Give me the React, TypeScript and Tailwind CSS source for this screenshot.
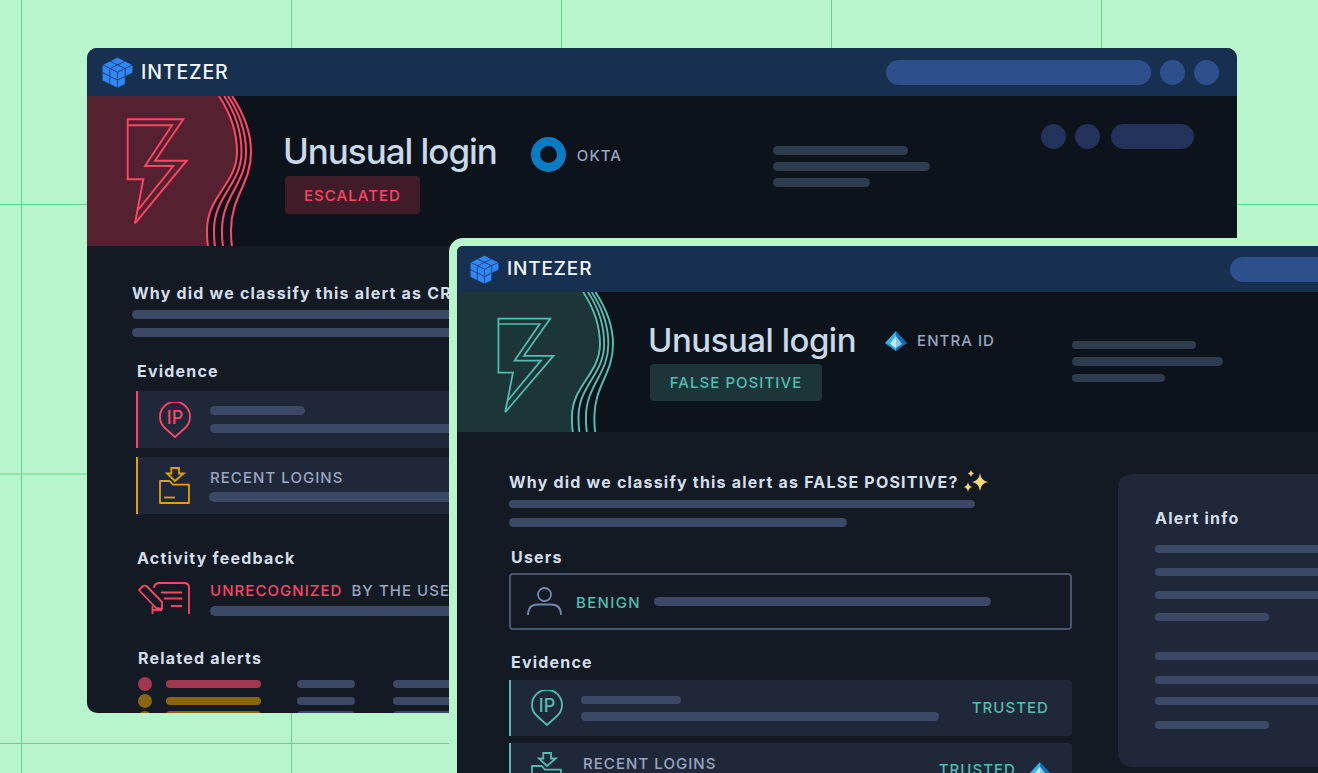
const font = "[font-family:Inter,'Liberation_Sans',sans-serif]";

const logoCells = () => {
  const p = (u: number, v: number, z: number) => `${15.5 + (u - v) * 7.6},${(u + v) * 3.7 + z * 7.8 + 0.5}`;
  const cells: string[] = [];
  for (let u = 0; u < 2; u++) for (let v = 0; v < 2; v++) cells.push([p(u, v, 0), p(u + 1, v, 0), p(u + 1, v + 1, 0), p(u, v + 1, 0)].join(" "));
  for (let u = 0; u < 2; u++) for (let z = 0; z < 2; z++) cells.push([p(u, 2, z), p(u + 1, 2, z), p(u + 1, 2, z + 1), p(u, 2, z + 1)].join(" "));
  cells.push([p(2, 1, 0), p(2, 0, 0), p(2, 0, 1), p(2, 1, 1)].join(" "));
  cells.push([p(2, 2, 0), p(2, 1, 0), p(2, 1, 1), p(2, 2, 1)].join(" "));
  cells.push([p(2, 2, 1), p(2, 1, 1), p(2, 1, 2), p(2, 2, 2)].join(" "));
  return cells;
};

function Logo({ small }: { small?: boolean }) {
  const size = small ? 29 : 31;
  return (
    <div className="flex items-center gap-[8px]">
      <svg width={size} height={size} viewBox="0 0 31 31">
        {logoCells().map((c) => (
          <polygon key={c} points={c} fill="#2f86f6" stroke="#18304f" strokeWidth="0.5" />
        ))}
      </svg>
      <span className={`${font} ${small ? "text-[19px]" : "text-[19.5px]"} leading-[24px] font-medium tracking-[0.045em] text-[#f2f6fb]`}>INTEZER</span>
    </div>
  );
}

function HeroArt({ color, fill, width, height, shift = 0, boltTransform }: { color: string; fill: string; width: number; height: number; shift?: number; boltTransform?: string }) {
  const lines = [
    [132, 150, 120],
    [137, 154.5, 127],
    [141, 159, 135],
    [145, 164, 144],
  ];
  const wave = ([t, m, b]: number[]) => `${t} 0 C ${t + 12} 18 ${m} 38 ${m} 56 C ${m} 88 ${b} 100 ${b} 134 C ${b} 140 ${b} 145 ${b + 1} 150`;
  return (
    <svg width={width} height={height} viewBox="0 0 170 150" className="shrink-0" fill="none">
      <g transform={`translate(${shift} 0)`}>
        <path d={`M${-shift} 0 H132 C144 18 150 38 150 56 C150 88 120 100 120 134 C120 140 120 145 121 150 H${-shift} Z`} fill={fill} />
        {lines.map((l) => (
          <path key={l[0]} d={`M${wave(l)}`} stroke={color} strokeWidth="2.1" />
        ))}
      </g>
      <g transform={boltTransform}>
        <path d="M40.7 23.3 H96.3 L68 64.7 H99.7 L48 127.3 L56.3 83.3 H40.7 Z" stroke={color} strokeWidth="1.9" />
        <path d="M40.7 29.3 H85 L58 70 H86.3 L51 114" stroke={color} strokeWidth="1.9" />
      </g>
    </svg>
  );
}

function IpIcon({ color }: { color: string }) {
  return (
    <svg width="32" height="36" viewBox="0 0 32 36" fill="none" className="shrink-0">
      <path d="M16 35 L6 26 A15 15 0 1 1 26 26 Z" stroke={color} strokeWidth="1.8" strokeLinejoin="round" />
      <text x="16" y="22" textAnchor="middle" fontSize="18" fontWeight="500" fontFamily="Inter, sans-serif" fill={color}>IP</text>
    </svg>
  );
}

function FolderIcon({ color }: { color: string }) {
  return (
    <svg width="31" height="37" viewBox="0 0 31 37" fill="none" className="shrink-0">
      <path d="M12.3 1 H20 V6.5 H24.7 L16 14 L8 6.5 H12.3 Z" stroke={color} strokeWidth="1.8" />
      <path d="M1 14 H10.7 L14 17.7 H30 V36 H1 Z" stroke={color} strokeWidth="1.8" strokeLinejoin="round" />
      <path d="M5 30.5 H16" stroke={color} strokeWidth="1.8" />
    </svg>
  );
}

function NoteIcon({ color }: { color: string }) {
  return (
    <svg width="52" height="33" viewBox="0 0 52 33" fill="none" className="shrink-0">
      <path d="M16 6 Q16 1 22 1 H46 Q51 1 51 6 V32" stroke={color} strokeWidth="1.8" />
      <path d="M23 10.5 H44 M26 16.5 H44 M33 24 H44" stroke={color} strokeWidth="1.8" />
      <path d="M1 8 L5 4 Q7 3 9 4.5 L24 20 V27 L18 26 Z" stroke={color} strokeWidth="1.8" strokeLinejoin="round" />
      <path d="M14.5 24 V32 M14.5 28 H24" stroke={color} strokeWidth="1.8" />
    </svg>
  );
}

function EntraIcon({ width = 22, height = 20 }: { width?: number; height?: number }) {
  return (
    <svg width={width} height={height} viewBox="0 0 22 20" className="shrink-0">
      <polygon points="11,0 0,12 11,20" fill="#35b4ec" />
      <polygon points="11,0 22,12 11,20" fill="#0f6fc0" />
      <polygon points="11,5 5,13 11,17" fill="#c5e8ef" />
      <polygon points="11,5 17,13 11,17" fill="#8dcbd9" />
      <polygon points="0,12 11,20 5.5,13.5" fill="#1f8fd6" />
    </svg>
  );
}

function Bar({ className }: { className: string }) {
  return <div className={`rounded-full bg-[#3b4966] shrink-0 ${className}`} />;
}

function Heading({ children, className = "" }: { children: React.ReactNode; className?: string }) {
  return <div className={`${font} text-[16px] leading-[20px] font-bold tracking-[0.075em] text-[#d3deec] whitespace-nowrap ${className}`}>{children}</div>;
}

function Label({ children, className = "" }: { children: React.ReactNode; className?: string }) {
  return <span className={`${font} text-[15px] leading-[18px] font-medium tracking-[0.07em] whitespace-nowrap ${className}`}>{children}</span>;
}

function RelatedRow({ dot, bar, last }: { dot: string; bar: string; last?: boolean }) {
  return (
    <div className={`flex h-[14px] shrink-0 ${last ? "items-start" : "items-center"}`}>
      <div className={`w-[14px] h-[14px] rounded-full ${dot}`} />
      <div className={`w-[95px] h-[8px] ml-[14px] rounded-full ${bar}`} />
      <Bar className="w-[58px] h-[8px] ml-[36px]" />
      <Bar className="w-[120px] h-[8px] ml-[38px]" />
    </div>
  );
}

function BackWindow() {
  return (
    <div className="absolute left-[87px] top-[48px] w-[1150px] h-[665px] rounded-[10px] overflow-hidden bg-[#131a24] flex flex-col">
      <div className="h-[48px] bg-[#18304f] flex items-center pl-[15px] pr-[18px] shrink-0">
        <Logo />
        <div className="ml-auto flex items-center gap-[9px]">
          <div className="w-[265px] h-[25px] rounded-full bg-[#2d4f8b]" />
          <div className="w-[25px] h-[25px] rounded-full bg-[#2d4f8b]" />
          <div className="w-[25px] h-[25px] rounded-full bg-[#2d4f8b]" />
        </div>
      </div>
      <div className="h-[150px] bg-[#0c131a] flex shrink-0">
        <HeroArt color="#ff4565" fill="#55202f" width={170} height={150} />
        <div className="ml-[26px] pt-[33px] w-[490px] shrink-0">
          <div className="flex items-start">
            <div className={`${font} text-[35px] leading-[44px] font-[550] tracking-[-0.03em] text-[#c9d9ea] whitespace-nowrap`}>Unusual login</div>
            <div className="w-[35px] h-[35px] rounded-full border-[9px] border-[#0a7cc4] ml-[34px] mt-[8px]" />
            <Label className="ml-[11px] mt-[18px] text-[#9aa5c3]">OKTA</Label>
          </div>
          <div className="mt-[3px] ml-[2px] w-[135px] h-[38px] rounded-[4px] bg-[#3f1c28] flex items-center justify-center">
            <Label className="text-[#ff4565] pt-[1px]">ESCALATED</Label>
          </div>
        </div>
        <div className="pt-[50px] flex flex-col gap-[7px] shrink-0">
          <div className="w-[135px] h-[9px] rounded-full bg-[#2f3b4f]" />
          <div className="w-[157px] h-[9px] rounded-full bg-[#2f3b4f]" />
          <div className="w-[97px] h-[9px] rounded-full bg-[#2f3b4f]" />
        </div>
        <div className="ml-auto mr-[43px] pt-[28px] flex items-start gap-[9px]">
          <div className="w-[25px] h-[25px] rounded-full bg-[#22325a]" />
          <div className="w-[25px] h-[25px] rounded-full bg-[#22325a]" />
          <div className="w-[83px] h-[25px] rounded-full bg-[#22325a] ml-[2px]" />
        </div>
      </div>
      <div className="pl-[45px] pt-[37px] flex flex-col">
        <Heading>Why did we classify this alert as CRITICAL?</Heading>
        <Bar className="w-[600px] h-[9px] mt-[7px]" />
        <Bar className="w-[500px] h-[9px] mt-[9px]" />
        <Heading className="mt-[24px] ml-[5px]">Evidence</Heading>
        <div className="mt-[10px] ml-[4px] w-[560px] h-[57px] bg-[#1f2838] border-l-2 border-[#ff4565] flex items-center pl-[21px]">
          <IpIcon color="#ff4565" />
          <div className="ml-[19px] flex flex-col gap-[9px]">
            <Bar className="w-[95px] h-[9px]" />
            <Bar className="w-[400px] h-[9px]" />
          </div>
        </div>
        <div className="mt-[9px] ml-[4px] w-[560px] h-[57px] bg-[#1f2838] border-l-2 border-[#e0a00c] flex items-center pl-[21px]">
          <FolderIcon color="#e0a00c" />
          <div className="ml-[20px] flex flex-col gap-[5px]">
            <Label className="text-[#9aa5c3]">RECENT LOGINS</Label>
            <Bar className="w-[400px] h-[10px] -ml-[1px]" />
          </div>
        </div>
        <Heading className="mt-[34px] ml-[5px]">Activity feedback</Heading>
        <div className="mt-[14px] ml-[6px] flex items-start">
          <NoteIcon color="#ff4565" />
          <div className="ml-[20px] flex flex-col gap-[6px]">
            <div className="flex gap-[9px]">
              <Label className="text-[#ff4565]">UNRECOGNIZED</Label>
              <Label className="text-[#9aa5c3]">BY THE USER</Label>
            </div>
            <Bar className="w-[400px] h-[10px]" />
          </div>
        </div>
        <Heading className="mt-[32px] ml-[6px]">Related alerts</Heading>
        <div className="mt-[9px] ml-[6px] flex flex-col gap-[3px]">
          <RelatedRow dot="bg-[#a2384f]" bar="bg-[#a2384f]" />
          <RelatedRow dot="bg-[#8a6510]" bar="bg-[#8a6510]" />
          <RelatedRow dot="bg-[#8a6510]" bar="bg-[#8a6510]" last />
        </div>
      </div>
    </div>
  );
}

function FrontWindow() {
  return (
    <div className="absolute left-[449px] top-[238px] w-[1000px] h-[700px] rounded-[14px] border-[8px] border-[#b9f5cc] overflow-hidden bg-[#131a24] flex flex-col">
      <div className="h-[46px] bg-[#18304f] flex items-center pl-[13px] shrink-0">
        <Logo small />
        <div className="ml-[638px] w-[265px] h-[25px] rounded-full bg-[#2d4f8b] shrink-0" />
      </div>
      <div className="h-[140px] bg-[#0c131a] flex shrink-0">
        <HeroArt color="#52bdb0" fill="#1c3539" width={159} height={140} shift={3} boltTransform="translate(3.5 6) scale(1 0.965)" />
        <div className="ml-[32px] pt-[26px] w-[424px] shrink-0">
          <div className="flex items-start">
            <div className={`${font} text-[33px] leading-[44px] font-[550] tracking-[-0.015em] text-[#c9d9ea] whitespace-nowrap`}>Unusual login</div>
            <div className="ml-[29px] mt-[13px]"><EntraIcon /></div>
            <Label className="ml-[10px] mt-[14px] text-[#9aa5c3]">ENTRA ID</Label>
          </div>
          <div className="mt-[2px] ml-[2px] w-[172px] h-[37px] rounded-[4px] bg-[#1c3539] flex items-center justify-center">
            <Label className="text-[#52bdb0]">FALSE POSITIVE</Label>
          </div>
        </div>
        <div className="pt-[49px] flex flex-col gap-[8px] shrink-0">
          <div className="w-[124px] h-[8px] rounded-full bg-[#2f3b4f]" />
          <div className="w-[151px] h-[9px] rounded-full bg-[#2f3b4f]" />
          <div className="w-[93px] h-[8px] rounded-full bg-[#2f3b4f]" />
        </div>
      </div>
      <div className="pl-[52px] pt-[38px] flex gap-[46px]">
        <div className="w-[563px] flex flex-col shrink-0">
          <div className="flex items-center">
            <Heading>Why did we classify this alert as FALSE POSITIVE?</Heading>
            <svg width="26" height="24" viewBox="0 0 26 24" className="ml-[4px] shrink-0">
              <path d="M17 3 Q18 11 25 12 Q18 13 17 21 Q16 13 9 12 Q16 11 17 3Z" fill="#f7d774" />
              <path d="M8 0 Q8.5 3 11 3.5 Q8.5 4 8 7 Q7.5 4 5 3.5 Q7.5 3 8 0Z" fill="#f7d774" />
              <path d="M5 12 Q5.5 16 9 17 Q5.5 18 5 22 Q4.5 18 1 17 Q4.5 16 5 12Z" fill="#f7d774" />
            </svg>
          </div>
          <Bar className="w-[466px] h-[8px] mt-[6px]" />
          <Bar className="w-[338px] h-[9px] mt-[10px]" />
          <Heading className="mt-[20px] ml-[2px]">Users</Heading>
          <div className="mt-[6px] w-[563px] h-[57px] rounded-[4px] border-2 border-[#48556f] flex items-center pl-[16px]">
            <svg width="35" height="29" viewBox="0 0 35 29" fill="none" className="shrink-0">
              <circle cx="17.5" cy="7.5" r="6.5" stroke="#7685ad" strokeWidth="1.8" />
              <path d="M1 28 Q1 17.5 11 17.5 H24 Q34 17.5 34 28" stroke="#7685ad" strokeWidth="1.8" />
            </svg>
            <Label className="ml-[14px] pt-[2px] tracking-[0.09em] text-[#52bdb0]">BENIGN</Label>
            <Bar className="w-[337px] h-[9px] ml-[13px]" />
          </div>
          <Heading className="mt-[22px] ml-[2px]">Evidence</Heading>
          <div className="mt-[8px] w-[563px] h-[56px] rounded-r-[4px] bg-[#1f2838] border-l-2 border-[#52bdb0] flex items-center pl-[20px] pr-[23px]">
            <IpIcon color="#52bdb0" />
            <div className="ml-[18px] flex flex-col gap-[8px]">
              <Bar className="w-[100px] h-[8px]" />
              <Bar className="w-[358px] h-[9px]" />
            </div>
            <Label className="ml-auto text-[#52bdb0]">TRUSTED</Label>
          </div>
          <div className="mt-[7px] w-[563px] h-[60px] rounded-r-[4px] bg-[#1f2838] border-l-2 border-[#52bdb0] flex items-start pl-[20px] pr-[22px] pt-[9px]">
            <FolderIcon color="#52bdb0" />
            <Label className="ml-[21px] mt-[3px] text-[#9aa5c3]">RECENT LOGINS</Label>
            <Label className="ml-auto mt-[9px] text-[#52bdb0]">TRUSTED</Label>
            <div className="ml-[14px] mt-[10px]"><EntraIcon width={20} height={18} /></div>
          </div>
        </div>
        <div className="mt-[4px] w-[400px] h-[293px] rounded-[14px] bg-[#1f2838] pl-[37px] pt-[34px] flex flex-col shrink-0">
          <Heading>Alert info</Heading>
          <Bar className="w-[300px] h-[8px] mt-[17px]" />
          <Bar className="w-[300px] h-[8px] mt-[15px]" />
          <Bar className="w-[300px] h-[8px] mt-[15px]" />
          <Bar className="w-[114px] h-[8px] mt-[14px]" />
          <Bar className="w-[300px] h-[8px] mt-[31px]" />
          <Bar className="w-[300px] h-[8px] mt-[16px]" />
          <Bar className="w-[300px] h-[8px] mt-[13px]" />
          <Bar className="w-[114px] h-[8px] mt-[16px]" />
        </div>
      </div>
    </div>
  );
}

export default function App() {
  return (
    <div className="relative w-[1318px] h-[773px] overflow-hidden bg-[#b9f5cc] bg-[linear-gradient(to_right,#5fd690_1px,transparent_1px),linear-gradient(to_bottom,#5fd690_1px,transparent_1px)] bg-[size:270px_269.5px] bg-[position:21px_204px]">
      <BackWindow />
      <FrontWindow />
    </div>
  );
}
